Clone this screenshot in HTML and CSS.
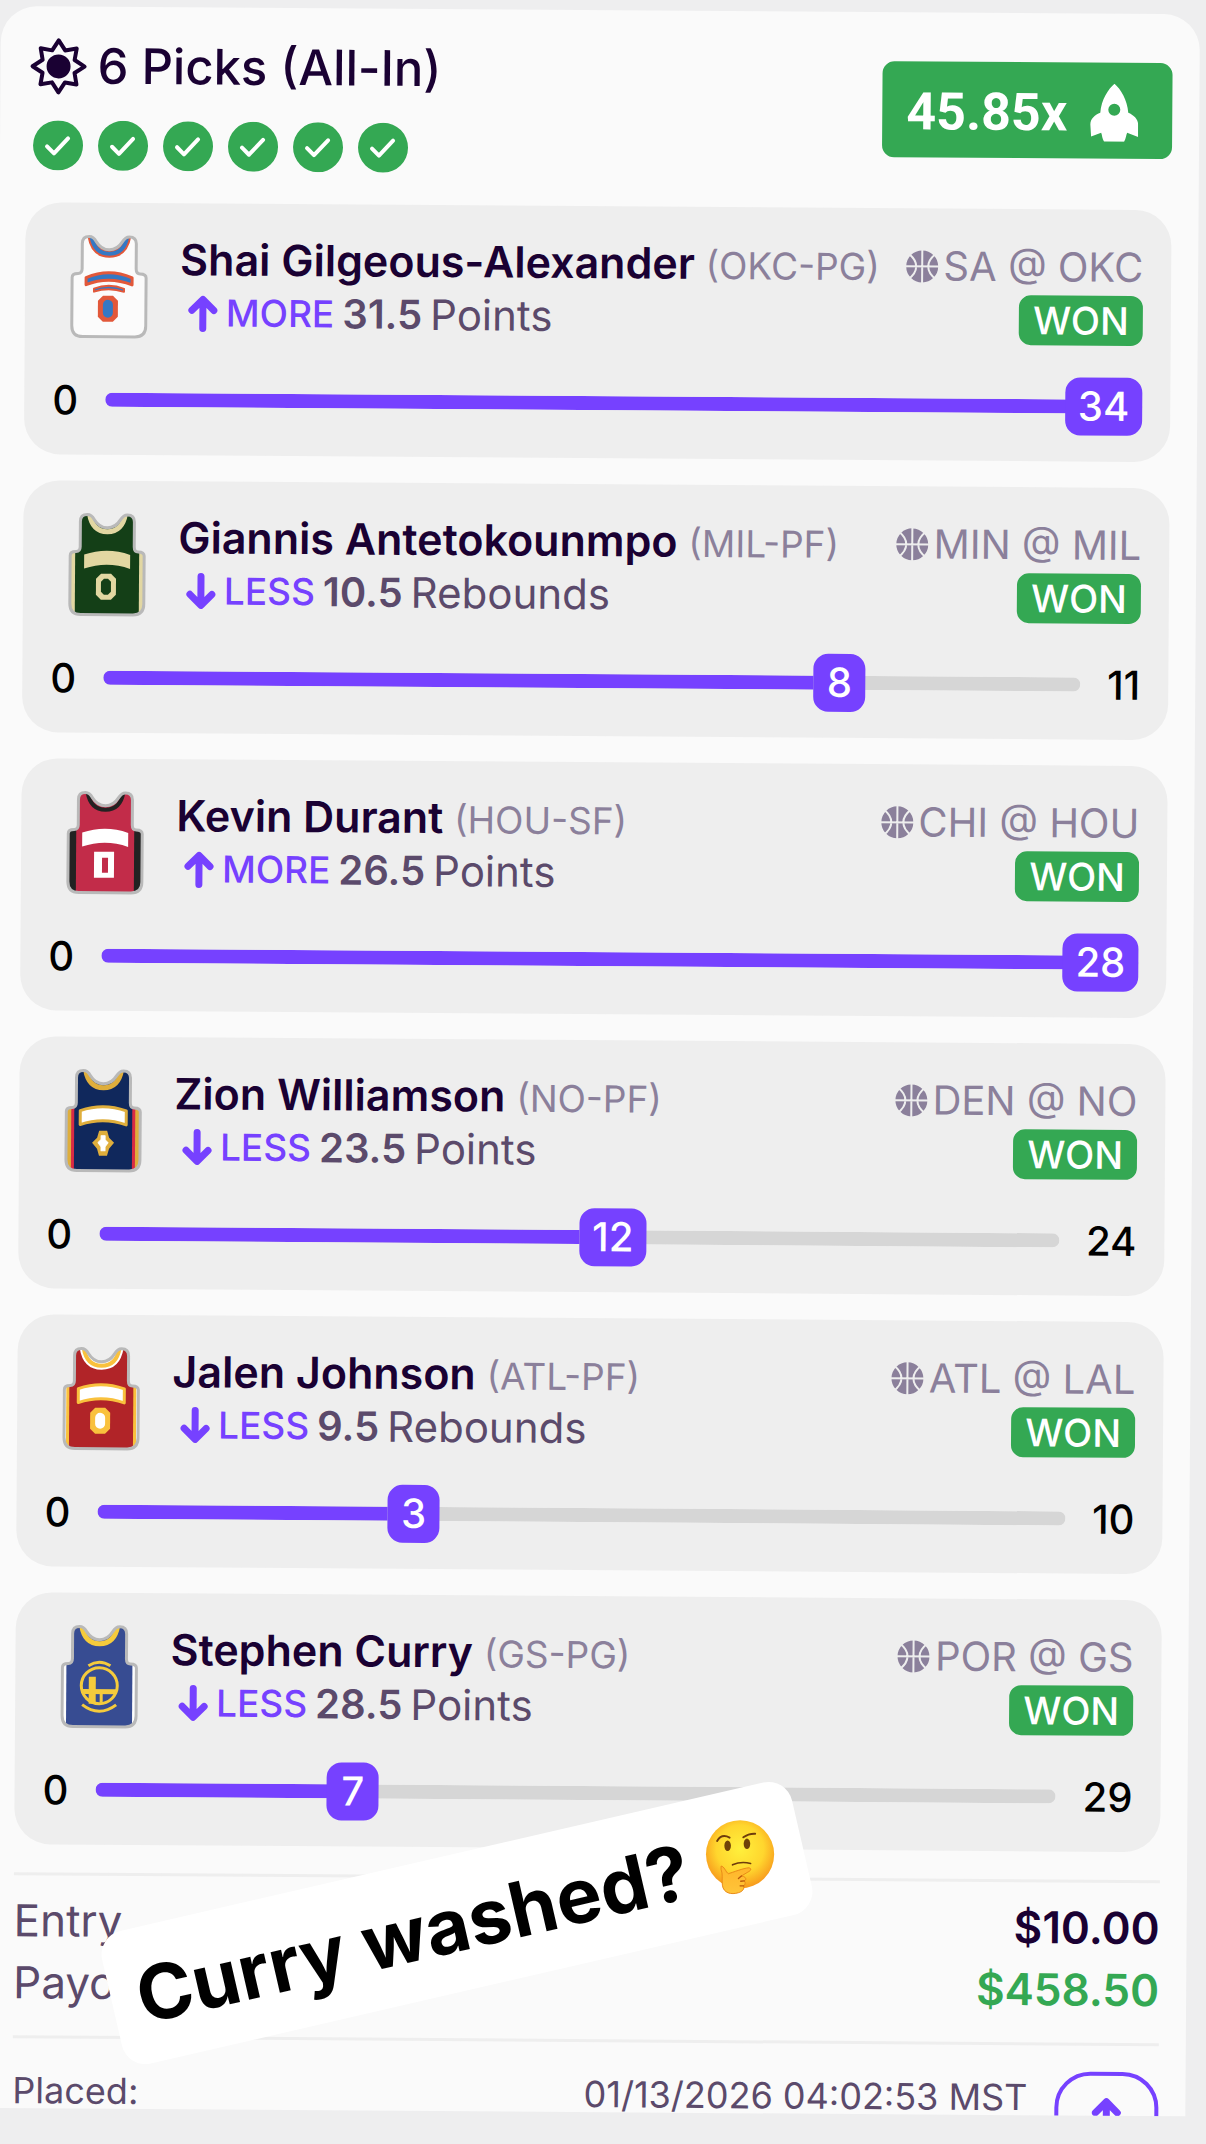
FILE: index.html
```
<!DOCTYPE html>
<html lang="en">
<head>
    <meta charset="UTF-8">
    <meta name="viewport" content="width=device-width, initial-scale=1.0">
    <title>6 Picks (All-In)</title>
    <link rel="stylesheet" href="styles.css">
</head>
<body>
    <!-- shared icon shapes -->
    <svg class="sprite" aria-hidden="true">
        <defs>
            <path id="jersey-shape" d="M12 9Q12 2 19 2Q23 2 26 7Q31 15 39 15Q47 15 52 7Q55 2 59 2Q66 2 66 9V34Q66 39 70 39Q76 39 76 43V91Q76 102 65 102H13Q2 102 2 91V43Q2 39 8 39Q12 39 12 34Z"/>
            <clipPath id="jersey-clip"><use href="#jersey-shape"/></clipPath>
            <path id="collar" d="M21 1Q24 19 39 19Q54 19 57 1" fill="none"/>
            <path id="band" d="M16 42Q39 34 62 42V56Q39 48 16 56Z"/>
            <path id="zero" d="M33 61H43L48 66V82L43 87H33L28 82V66Z"/>
        </defs>
        <symbol id="check" viewBox="0 0 50 50">
            <circle cx="25" cy="25" r="25" fill="#34a853"/>
            <path d="M14 26L21 33L35 18" fill="none" stroke="#fff" stroke-width="4" stroke-linecap="round" stroke-linejoin="round"/>
        </symbol>
        <symbol id="arrow-up" viewBox="0 0 30 38">
            <path d="M15 34V6M4 16L15 5L26 16" fill="none" stroke="#7641ff" stroke-width="7" stroke-linecap="round" stroke-linejoin="round"/>
        </symbol>
        <symbol id="arrow-down" viewBox="0 0 30 38">
            <path d="M15 4V32M4 22L15 33L26 22" fill="none" stroke="#7641ff" stroke-width="7" stroke-linecap="round" stroke-linejoin="round"/>
        </symbol>
        <symbol id="ball" viewBox="0 0 34 34">
            <circle cx="17" cy="17" r="16" fill="#8b809b"/>
            <path d="M17 0V34M0 17H34M3 4Q11 10 11 17Q11 24 3 30M31 4Q23 10 23 17Q23 24 31 30" fill="none" stroke="#eee" stroke-width="2"/>
        </symbol>
    </svg>

    <main class="sheet">
        <header class="header">
            <div>
                <h1 class="title">
                    <svg class="title-icon" viewBox="0 0 58 58" aria-hidden="true">
                        <path d="M29 3L35.500 13L47 11L45 22.500L55 29L45 35.500L47 47L35.500 45L29 55L22.500 45L11 47L13 35.500L3 29L13 22.500L11 11L22.500 13Z" fill="none" stroke="#1a0133" stroke-width="4" stroke-linejoin="round"/>
                        <circle cx="29" cy="29" r="12" fill="#1a0133"/>
                    </svg>
                    6 Picks (All-In)
                </h1>
                <div class="checks">
                    <svg><use href="#check"/></svg>
                    <svg><use href="#check"/></svg>
                    <svg><use href="#check"/></svg>
                    <svg><use href="#check"/></svg>
                    <svg><use href="#check"/></svg>
                    <svg><use href="#check"/></svg>
                </div>
            </div>
            <div class="multiplier">
                45.85x
                <svg viewBox="0 0 48 58" aria-hidden="true">
                    <path fill="#fff" fill-rule="evenodd" d="M24 0C30 5 37 16 38 29C43 31 48 35 48 41V53L37 49C36 51 36 55 34 58H14C12 55 12 51 11 49L1 53L0 41C0 35 5 31 10 29C11 16 18 5 24 0ZM24 20A6 6 0 1 0 24 32A6 6 0 1 0 24 20Z"/>
                </svg>
            </div>
        </header>

        <section class="picks">
            <article class="pick">
                <div class="pick-top">
                    <svg class="jersey" viewBox="0 0 78 104">
                        <g clip-path="url(#jersey-clip)">
                            <rect width="78" height="104" fill="#fbfbfb"/>
                            <use href="#collar" stroke="#e2583a" stroke-width="8"/>
                            <use href="#collar" stroke="#3478c4" stroke-width="4"/>
                        </g>
                        <path d="M16 43Q39 33 62 43V50Q39 41 16 50Z" fill="#3478c4" stroke="#e2583a" stroke-width="3" stroke-linejoin="round"/>
                        <path d="M24 54Q39 48 54 54V57Q39 52 24 57Z" fill="#3478c4" stroke="#e2583a" stroke-width="2" stroke-linejoin="round"/>
                        <use href="#zero" fill="#e2583a"/>
                        <rect x="33" y="65" width="10" height="18" rx="5" fill="#3478c4"/>
                        <use href="#jersey-shape" class="jersey-line"/>
                    </svg>
                    <div class="pick-info">
                        <h2 class="player">Shai Gilgeous-Alexander <span class="team">(OKC-PG)</span></h2>
                        <p class="line"><svg><use href="#arrow-up"/></svg><span class="side">MORE</span> <strong>31.5</strong> Points</p>
                    </div>
                    <div class="pick-game">
                        <span class="matchup"><svg><use href="#ball"/></svg>SA @ OKC</span>
                        <span class="won">WON</span>
                    </div>
                </div>
                <div class="result">
                    <span>0</span>
                    <div class="track full">
                        <progress value="34" max="34" aria-label="Points"></progress>
                        <b class="value">34</b>
                    </div>
                </div>
            </article>

            <article class="pick">
                <div class="pick-top">
                    <svg class="jersey" viewBox="0 0 78 104">
                        <g clip-path="url(#jersey-clip)">
                            <rect width="78" height="104" fill="#e2d7a2"/>
                            <path d="M7 0H71V104H7Z" fill="#143f17"/>
                            <use href="#collar" stroke="#e2d7a2" stroke-width="5"/>
                        </g>
                        <use href="#band" fill="#e2d7a2"/>
                        <use href="#zero" fill="#e2d7a2"/>
                        <path d="M36 66H40L43 69V79L40 82H36L33 79V69Z" fill="#143f17"/>
                        <use href="#jersey-shape" class="jersey-line"/>
                    </svg>
                    <div class="pick-info">
                        <h2 class="player">Giannis Antetokounmpo <span class="team">(MIL-PF)</span></h2>
                        <p class="line"><svg><use href="#arrow-down"/></svg><span class="side">LESS</span> <strong>10.5</strong> Rebounds</p>
                    </div>
                    <div class="pick-game">
                        <span class="matchup"><svg><use href="#ball"/></svg>MIN @ MIL</span>
                        <span class="won">WON</span>
                    </div>
                </div>
                <div class="result">
                    <span>0</span>
                    <div class="track">
                        <progress value="8" max="11" aria-label="Rebounds"></progress>
                        <b class="value" style="left: 72.7%">8</b>
                    </div>
                    <span>11</span>
                </div>
            </article>

            <article class="pick">
                <div class="pick-top">
                    <svg class="jersey" viewBox="0 0 78 104">
                        <g clip-path="url(#jersey-clip)">
                            <rect width="78" height="104" fill="#222"/>
                            <path d="M10 0H68V104H10Z" fill="#c22c49"/>
                            <use href="#collar" stroke="#222" stroke-width="4"/>
                        </g>
                        <use href="#band" fill="#fff"/>
                        <path d="M28 61H48V87H28ZM36 67V82H42V67Z" fill="#fff" fill-rule="evenodd"/>
                        <use href="#jersey-shape" class="jersey-line"/>
                    </svg>
                    <div class="pick-info">
                        <h2 class="player">Kevin Durant <span class="team">(HOU-SF)</span></h2>
                        <p class="line"><svg><use href="#arrow-up"/></svg><span class="side">MORE</span> <strong>26.5</strong> Points</p>
                    </div>
                    <div class="pick-game">
                        <span class="matchup"><svg><use href="#ball"/></svg>CHI @ HOU</span>
                        <span class="won">WON</span>
                    </div>
                </div>
                <div class="result">
                    <span>0</span>
                    <div class="track full">
                        <progress value="28" max="28" aria-label="Points"></progress>
                        <b class="value">28</b>
                    </div>
                </div>
            </article>

            <article class="pick">
                <div class="pick-top">
                    <svg class="jersey" viewBox="0 0 78 104">
                        <g clip-path="url(#jersey-clip)">
                            <rect width="78" height="104" fill="#dfae3c"/>
                            <path d="M7 0H71V104H7Z" fill="#d92b45"/>
                            <path d="M10 0H68V104H10Z" fill="#10285c"/>
                            <use href="#collar" stroke="#dfae3c" stroke-width="5"/>
                        </g>
                        <use href="#band" fill="#fff" stroke="#dfae3c" stroke-width="3" stroke-linejoin="round"/>
                        <path d="M35 62H43L45 69L50 74L45 80L43 87H35L33 80L28 74L33 69Z" fill="#dfae3c"/>
                        <path d="M37 67H41V71L44 74L41 78V82H37V78L34 74L37 71Z" fill="#fff" stroke="#fff" stroke-linejoin="round"/>
                        <use href="#jersey-shape" class="jersey-line"/>
                    </svg>
                    <div class="pick-info">
                        <h2 class="player">Zion Williamson <span class="team">(NO-PF)</span></h2>
                        <p class="line"><svg><use href="#arrow-down"/></svg><span class="side">LESS</span> <strong>23.5</strong> Points</p>
                    </div>
                    <div class="pick-game">
                        <span class="matchup"><svg><use href="#ball"/></svg>DEN @ NO</span>
                        <span class="won">WON</span>
                    </div>
                </div>
                <div class="result">
                    <span>0</span>
                    <div class="track">
                        <progress value="12" max="24" aria-label="Points"></progress>
                        <b class="value" style="left: 50%">12</b>
                    </div>
                    <span>24</span>
                </div>
            </article>

            <article class="pick">
                <div class="pick-top">
                    <svg class="jersey" viewBox="0 0 78 104">
                        <g clip-path="url(#jersey-clip)">
                            <rect width="78" height="104" fill="#fdfdfd"/>
                            <path d="M4 0H74V104H4Z" fill="#f9c13d"/>
                            <path d="M7 0H71V104H7Z" fill="#b12428"/>
                            <use href="#collar" stroke="#fff" stroke-width="8"/>
                            <use href="#collar" stroke="#f9c13d" stroke-width="4"/>
                        </g>
                        <use href="#band" fill="#fff" stroke="#f9c13d" stroke-width="3" stroke-linejoin="round"/>
                        <use href="#zero" fill="#f9c13d"/>
                        <rect x="33" y="66" width="10" height="16" rx="5" fill="#fff"/>
                        <use href="#jersey-shape" class="jersey-line"/>
                    </svg>
                    <div class="pick-info">
                        <h2 class="player">Jalen Johnson <span class="team">(ATL-PF)</span></h2>
                        <p class="line"><svg><use href="#arrow-down"/></svg><span class="side">LESS</span> <strong>9.5</strong> Rebounds</p>
                    </div>
                    <div class="pick-game">
                        <span class="matchup"><svg><use href="#ball"/></svg>ATL @ LAL</span>
                        <span class="won">WON</span>
                    </div>
                </div>
                <div class="result">
                    <span>0</span>
                    <div class="track">
                        <progress value="3" max="10" aria-label="Rebounds"></progress>
                        <b class="value" style="left: 30%">3</b>
                    </div>
                    <span>10</span>
                </div>
            </article>

            <article class="pick">
                <div class="pick-top">
                    <svg class="jersey" viewBox="0 0 78 104">
                        <g clip-path="url(#jersey-clip)">
                            <rect width="78" height="104" fill="#fdfdfd"/>
                            <path d="M6 0H72V104H6Z" fill="#374c92"/>
                            <use href="#collar" stroke="#f5cb3c" stroke-width="5"/>
                        </g>
                        <g fill="none" stroke="#f5cb3c" stroke-width="3">
                            <circle cx="39" cy="61" r="18"/>
                            <path d="M28 41Q39 34 50 41M22 80Q39 93 56 80"/>
                            <path d="M32 52V79" stroke-width="7"/>
                            <path d="M22 67H56" stroke-width="5"/>
                            <path d="M41 68V78"/>
                        </g>
                        <use href="#jersey-shape" class="jersey-line"/>
                    </svg>
                    <div class="pick-info">
                        <h2 class="player">Stephen Curry <span class="team">(GS-PG)</span></h2>
                        <p class="line"><svg><use href="#arrow-down"/></svg><span class="side">LESS</span> <strong>28.5</strong> Points</p>
                    </div>
                    <div class="pick-game">
                        <span class="matchup"><svg><use href="#ball"/></svg>POR @ GS</span>
                        <span class="won">WON</span>
                    </div>
                </div>
                <div class="result">
                    <span>0</span>
                    <div class="track">
                        <progress value="7" max="29" aria-label="Points"></progress>
                        <b class="value" style="left: 24.1%">7</b>
                    </div>
                    <span>29</span>
                </div>
            </article>
        </section>

        <dl class="summary">
            <div><dt>Entry</dt><dd>$10.00</dd></div>
            <div><dt>Payout</dt><dd class="payout">$458.50</dd></div>
        </dl>

        <footer class="placed">
            <span>Placed:</span>
            <time datetime="2026-01-13T04:02:53-07:00">01/13/2026 04:02:53 MST</time>
            <button class="share" type="button" aria-label="Share">
                <svg><use href="#arrow-up"/></svg>
            </button>
        </footer>
    </main>

    <div class="sticker">
        Curry washed?
        <svg viewBox="70 58 222 244" aria-hidden="true">
            <defs>
                <radialGradient id="face" cx="50%" cy="42%" r="58%">
                    <stop offset="0" stop-color="#fff03c"/>
                    <stop offset="0.6" stop-color="#ffd62e"/>
                    <stop offset="1" stop-color="#f7981c"/>
                </radialGradient>
                <linearGradient id="hand" x1="0" y1="0" x2="0" y2="1">
                    <stop offset="0" stop-color="#ffb52a"/>
                    <stop offset="1" stop-color="#ffc53a"/>
                </linearGradient>
            </defs>
            <g transform="rotate(13 180 178)">
                <circle cx="180" cy="170" r="104" fill="url(#face)"/>
                <ellipse cx="142" cy="144" rx="10" ry="16" fill="#6f4208"/>
                <ellipse cx="201" cy="138" rx="10" ry="16" fill="#6f4208"/>
                <g fill="none" stroke="#6f3c0c" stroke-width="6" stroke-linecap="round">
                    <path d="M110 129Q124 106 148 119"/>
                    <path d="M190 118Q206 106 226 107"/>
                    <path d="M157 202Q184 190 212 198" stroke-width="5"/>
                </g>
                <path d="M122 206C131 205 137 225 144 229C158 225 190 212 207 211C217 213 212 221 204 224L184 236C200 238 200 248 193 251C198 258 195 263 191 266C194 275 187 284 175 287C153 294 129 288 126 264C124 246 128 230 122 216Z" fill="url(#hand)" stroke="#e98a17" stroke-width="3"/>
                <path d="M184 236L175 244M193 251L182 252M191 266L180 266" fill="none" stroke="#b9570c" stroke-width="4" stroke-linecap="round"/>
            </g>
        </svg>
    </div>
</body>
</html>
```
FILE: styles.css
```
* {
    box-sizing: border-box;
}
body {
    position: relative;
    font-family: Inter, "Liberation Sans", sans-serif;
    margin: 0;
    height: 100vh;
    overflow: hidden;
    background: #eeeeef;
    color: #5b4a6b;
}
h1, h2, p, dl, dd {
    margin: 0;
}
svg {
    display: block;
    flex: none;
}
.sprite {
    position: absolute;
    width: 0;
    height: 0;
}
.sheet {
    margin: 6px 6px 0 1px;
    height: calc(100vh - 42px);
    padding: 30px 27px 0 26px;
    overflow: hidden;
    background: #fafafa;
    border-radius: 36px 36px 0 0;
    transform: rotate(0.4deg);
    transform-origin: top left;
}

/* header */
.header {
    display: flex;
    justify-content: space-between;
    align-items: center;
    margin-bottom: 32px;
}
.title {
    display: flex;
    align-items: center;
    gap: 10px;
    padding-left: 3px;
    color: #1a0133;
    font-size: 49px;
    line-height: 60px;
    font-weight: 500;
}
.title-icon {
    width: 58px;
    height: 58px;
}
.checks {
    display: flex;
    gap: 15px;
    margin-top: 24px;
    padding-left: 7px;
}
.checks svg {
    width: 50px;
    height: 50px;
}
.multiplier {
    display: flex;
    align-items: center;
    gap: 23px;
    height: 96px;
    padding: 4px 34px 0 24px;
    border-radius: 12px;
    background: #34a853;
    color: #fff;
    font-family: Roboto, "Liberation Sans", sans-serif;
    font-size: 52px;
    font-weight: 700;
}
.multiplier svg {
    width: 48px;
    height: 58px;
}

/* pick cards */
.picks {
    display: grid;
    gap: 26px;
}
.pick {
    padding: 30px 28px 26px;
    border-radius: 36px;
    background: #eee;
}
.pick-top {
    display: flex;
    align-items: flex-end;
    padding-left: 17px;
}
.jersey {
    width: 78px;
    height: 104px;
    margin-right: 32px;
}
.jersey-line {
    fill: none;
    stroke: #b9b9b9;
    stroke-width: 3;
}
.pick-info {
    flex: 1;
    white-space: nowrap;
}
.player {
    height: 53px;
    color: #1a0133;
    font-size: 43px;
    line-height: 52px;
    font-weight: 600;
}
.team {
    color: #8b809b;
    font-size: 37px;
    font-weight: 400;
}
.line {
    display: flex;
    align-items: center;
    gap: 8px;
    padding-left: 8px;
    font-size: 42px;
    line-height: 53px;
}
.line svg {
    width: 30px;
    height: 38px;
}
.side {
    color: #7641ff;
    font-size: 37px;
    font-weight: 500;
}
.line strong {
    font-size: 40px;
    font-weight: 600;
}
.pick-game {
    display: flex;
    flex-direction: column;
    align-items: flex-end;
    white-space: nowrap;
}
.matchup {
    display: flex;
    align-items: center;
    gap: 4px;
    color: #8b809b;
    font-size: 40px;
    line-height: 56px;
}
.matchup svg {
    width: 34px;
    height: 34px;
}
.won {
    padding: 0 14px;
    border-radius: 12px;
    background: #34a853;
    color: #fff;
    font-size: 38px;
    line-height: 50px;
    font-weight: 500;
}
.result {
    display: flex;
    align-items: center;
    gap: 27px;
    height: 58px;
    margin-top: 32px;
    color: #000;
    font-size: 40px;
    font-weight: 500;
}
.track {
    position: relative;
    display: flex;
    align-items: center;
    flex: 1;
    height: 58px;
}
.track progress {
    appearance: none;
    flex: 1;
    width: 100%;
    height: 14px;
    border: none;
    border-radius: 7px;
    overflow: hidden;
    background: #d6d6d6;
}
.track progress::-webkit-progress-bar {
    background: #d6d6d6;
}
.track progress::-webkit-progress-value {
    background: #7641ff;
}
.value {
    position: absolute;
    top: 0;
    min-width: 52px;
    padding: 0 13px;
    border-radius: 15px;
    background: #7641ff;
    color: #fff;
    line-height: 58px;
    font-weight: 500;
    text-align: center;
}
.full .value {
    right: 0;
}

/* totals */
.summary {
    margin: 28px 0 0;
    padding: 14px 0 22px;
    border-top: 3px solid #eee;
    border-bottom: 3px solid #eee;
}
.summary div {
    display: flex;
    justify-content: space-between;
    font-size: 44px;
    line-height: 62px;
}
.summary dd {
    color: #1a0133;
    font-weight: 600;
}
.summary .payout {
    color: #34a853;
}
.placed {
    display: flex;
    align-items: flex-start;
    gap: 27px;
    padding-top: 26px;
    font-size: 36px;
    line-height: 52px;
}
.placed time {
    margin-left: auto;
}
.share {
    display: flex;
    justify-content: center;
    align-items: center;
    width: 104px;
    height: 88px;
    border: 4px solid #7641ff;
    border-radius: 36px;
    background: none;
}
.share svg {
    width: 30px;
    height: 38px;
}

/* caption sticker on top of the slip */
.sticker {
    position: absolute;
    left: 103px;
    top: 1855px;
    display: flex;
    align-items: center;
    justify-content: space-between;
    width: 708px;
    height: 136px;
    padding: 0 26px;
    border-radius: 24px;
    background: #fff;
    color: #000;
    font-size: 76px;
    font-weight: 700;
    white-space: nowrap;
    transform: rotate(-13deg);
}
.sticker svg {
    width: 74px;
    height: 80px;
}
```
